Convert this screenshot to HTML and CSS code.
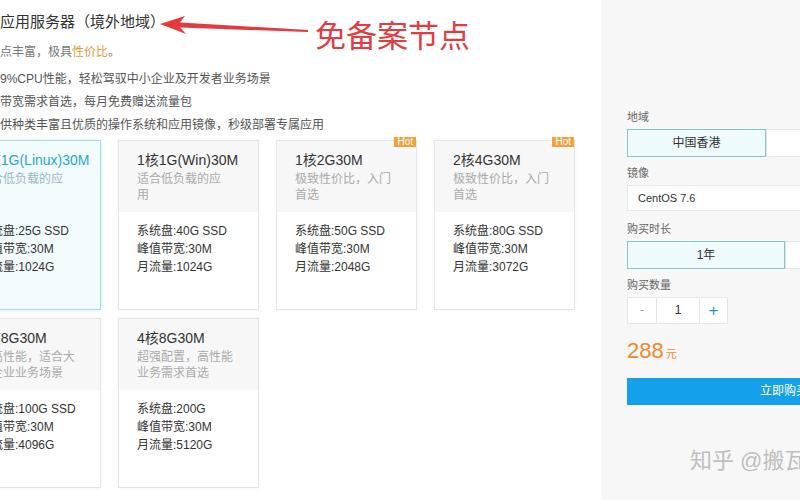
FILE: index.html
```html
<!DOCTYPE html>
<html lang="zh-CN">
<head>
<meta charset="utf-8">
<title>应用服务器（境外地域）</title>
<link rel="stylesheet" href="styles.css">
</head>
<body>
<div class="page">
  <main class="main">
    <div class="head">
      <h1 class="title">应用服务器（境外地域）</h1>
      <svg class="arrow" width="150" height="22" viewBox="0 0 150 22">
        <polygon points="0,10 25,2 20,8.5 148,16 148,18 20,13.5 26,20" fill="#e6393e"/>
      </svg>
      <span class="note">免备案节点</span>
    </div>
    <p class="intro">点丰富，极具<span class="hl">性价比</span>。</p>
    <ul class="features">
      <li>9%CPU性能，轻松驾驭中小企业及开发者业务场景</li>
      <li>带宽需求首选，每月免费赠送流量包</li>
      <li>供种类丰富且优质的操作系统和应用镜像，秒级部署专属应用</li>
    </ul>
    <div class="cards">
      <div class="card selected">
        <div class="card-head">
          <div class="card-title">1核1G(Linux)30M</div>
          <div class="card-desc">适合低负载的应<br>用</div>
        </div>
        <div class="card-body">
          <div>系统盘:25G SSD</div>
          <div>峰值带宽:30M</div>
          <div>月流量:1024G</div>
        </div>
      </div>
      <div class="card">
        <div class="card-head">
          <div class="card-title">1核1G(Win)30M</div>
          <div class="card-desc">适合低负载的应<br>用</div>
        </div>
        <div class="card-body">
          <div>系统盘:40G SSD</div>
          <div>峰值带宽:30M</div>
          <div>月流量:1024G</div>
        </div>
      </div>
      <div class="card">
        <span class="hot">Hot</span>
        <div class="card-head">
          <div class="card-title">1核2G30M</div>
          <div class="card-desc">极致性价比，入门<br>首选</div>
        </div>
        <div class="card-body">
          <div>系统盘:50G SSD</div>
          <div>峰值带宽:30M</div>
          <div>月流量:2048G</div>
        </div>
      </div>
      <div class="card">
        <span class="hot">Hot</span>
        <div class="card-head">
          <div class="card-title">2核4G30M</div>
          <div class="card-desc">极致性价比，入门<br>首选</div>
        </div>
        <div class="card-body">
          <div>系统盘:80G SSD</div>
          <div>峰值带宽:30M</div>
          <div>月流量:3072G</div>
        </div>
      </div>
      <div class="card">
        <div class="card-head">
          <div class="card-title">4核8G30M</div>
          <div class="card-desc">超高性能，适合大<br>型企业业务场景</div>
        </div>
        <div class="card-body">
          <div>系统盘:100G SSD</div>
          <div>峰值带宽:30M</div>
          <div>月流量:4096G</div>
        </div>
      </div>
      <div class="card">
        <div class="card-head">
          <div class="card-title">4核8G30M</div>
          <div class="card-desc">超强配置，高性能<br>业务需求首选</div>
        </div>
        <div class="card-body">
          <div>系统盘:200G</div>
          <div>峰值带宽:30M</div>
          <div>月流量:5120G</div>
        </div>
      </div>
    </div>
  </main>
  <aside class="panel">
    <div class="field">
      <div class="label">地域</div>
      <div class="opts">
        <span class="opt region on">中国香港</span>
        <span class="opt region">新加坡</span>
      </div>
    </div>
    <div class="field">
      <div class="label">镜像</div>
      <div class="select">CentOS 7.6</div>
    </div>
    <div class="field">
      <div class="label">购买时长</div>
      <div class="opts">
        <span class="opt term on">1年</span>
        <span class="opt term">2年</span>
      </div>
    </div>
    <div class="field">
      <div class="label">购买数量</div>
      <div class="qty">
        <span class="qbtn minus">-</span>
        <span class="qval">1</span>
        <span class="qbtn plus">+</span>
      </div>
    </div>
    <div class="price"><span class="num">288</span><span class="unit">元</span></div>
    <div class="buy">立即购买</div>
    <div class="watermark">知乎 @搬瓦工</div>
  </aside>
</div>
</body>
</html>
```
FILE: styles.css
```css
html, body {
  margin: 0;
  padding: 0;
  background: #fff;
}
body {
  font-family: "Liberation Sans", "Noto Sans CJK SC", sans-serif;
  color: #333;
  width: 800px;
  height: 500px;
  overflow: hidden;
}
.page {
  display: flex;
  width: 800px;
  height: 500px;
  overflow: hidden;
}
.main {
  width: 601px;
  flex: none;
  overflow: hidden;
}
.head {
  display: flex;
  align-items: flex-start;
  height: 40px;
}
.title {
  margin: 12px 0 0 0;
  font-size: 15px;
  line-height: 20px;
  font-weight: normal;
  color: #333;
  width: 160px;
  flex: none;
  white-space: nowrap;
}
.arrow {
  margin-top: 14px;
  flex: none;
  display: block;
}
.note {
  margin: 20px 0 0 5px;
  font-size: 31px;
  line-height: 34px;
  color: #e33b40;
  white-space: nowrap;
  flex: none;
}
.intro {
  margin: 2px 0 0 0;
  font-size: 12px;
  line-height: 20px;
  color: #777;
}
.hl {
  color: #e39a3a;
}
.features {
  list-style: none;
  margin: 6px 0 0 0;
  padding: 0;
  font-size: 12px;
  line-height: 23px;
  color: #555;
}
.cards {
  display: grid;
  grid-template-columns: repeat(4, 141px);
  grid-auto-rows: 170px;
  column-gap: 17px;
  row-gap: 8px;
  margin: 3px 0 0 -40px;
}
.card {
  position: relative;
  box-sizing: border-box;
  border: 1px solid #e6e6e6;
  background: #fff;
  box-shadow: 0 0 3px rgba(0, 0, 0, 0.06);
}
.card-head {
  background: #f7f7f8;
  padding: 10px 18px 9px 18px;
}
.card-title {
  font-size: 14px;
  line-height: 18px;
  color: #333;
  white-space: nowrap;
}
.card-desc {
  margin-top: 2px;
  font-size: 12px;
  line-height: 16px;
  color: #aaa;
  white-space: nowrap;
}
.card-body {
  padding: 10px 18px 0 18px;
  font-size: 12px;
  line-height: 18px;
  color: #333;
  white-space: nowrap;
}
.card.selected {
  border-color: #a9dbe6;
  background: #f2fbfd;
  box-shadow: 0 0 4px rgba(120, 200, 220, 0.35);
}
.card.selected .card-head {
  background: transparent;
}
.card.selected .card-title {
  color: #2aa5cc;
}
.card.selected .card-desc {
  color: #9bb8c2;
}
.hot {
  position: absolute;
  top: -4px;
  right: 0;
  background: #f0a23e;
  color: #fff;
  font-size: 10px;
  line-height: 10px;
  padding: 0 3px;
}
.panel {
  position: relative;
  flex: none;
  width: 199px;
  background: #f7f7f7;
  padding: 109px 0 0 26px;
  box-sizing: border-box;
  overflow: hidden;
}
.field {
  margin-bottom: 8px;
}
.label {
  font-size: 11px;
  line-height: 16px;
  color: #666;
  margin-bottom: 4px;
  white-space: nowrap;
}
.opts {
  display: flex;
  white-space: nowrap;
}
.opt {
  box-sizing: border-box;
  flex: none;
  height: 28px;
  line-height: 26px;
  text-align: center;
  font-size: 12px;
  color: #333;
  background: #fff;
  border: 1px solid #e5e5e5;
}
.opt.on {
  background: #eefafc;
  border-color: #86c4d1;
}
.region {
  width: 139px;
}
.term {
  width: 158px;
}
.select {
  box-sizing: border-box;
  width: 300px;
  height: 26px;
  line-height: 24px;
  padding-left: 10px;
  font-size: 11px;
  color: #333;
  background: #fff;
  border: 1px solid #e8e8e8;
  margin-bottom: 10px;
}
.qty {
  display: flex;
  height: 27px;
}
.qty span {
  box-sizing: border-box;
  height: 27px;
  line-height: 25px;
  text-align: center;
  background: #fff;
  border: 1px solid #e6e6e6;
  font-size: 12px;
}
.qbtn.minus {
  width: 30px;
  color: #999;
}
.qval {
  width: 42px;
  border-left: none !important;
  border-right: none !important;
  color: #333;
}
.qbtn.plus {
  width: 29px;
  color: #1b96d2;
  font-size: 17px !important;
}
.price {
  margin-top: 13px;
  height: 28px;
  line-height: 28px;
  color: #ee8a2c;
  white-space: nowrap;
}
.price .num {
  font-size: 22px;
}
.price .unit {
  font-size: 11px;
  margin-left: 2px;
}
.buy {
  margin-top: 13px;
  width: 314px;
  height: 27px;
  line-height: 27px;
  text-align: center;
  background: #14a0ea;
  color: #fff;
  font-size: 12px;
  white-space: nowrap;
}
.watermark {
  position: absolute;
  left: 89px;
  top: 447px;
  font-size: 22px;
  line-height: 28px;
  color: rgba(140, 140, 140, 0.55);
  white-space: nowrap;
}
```
